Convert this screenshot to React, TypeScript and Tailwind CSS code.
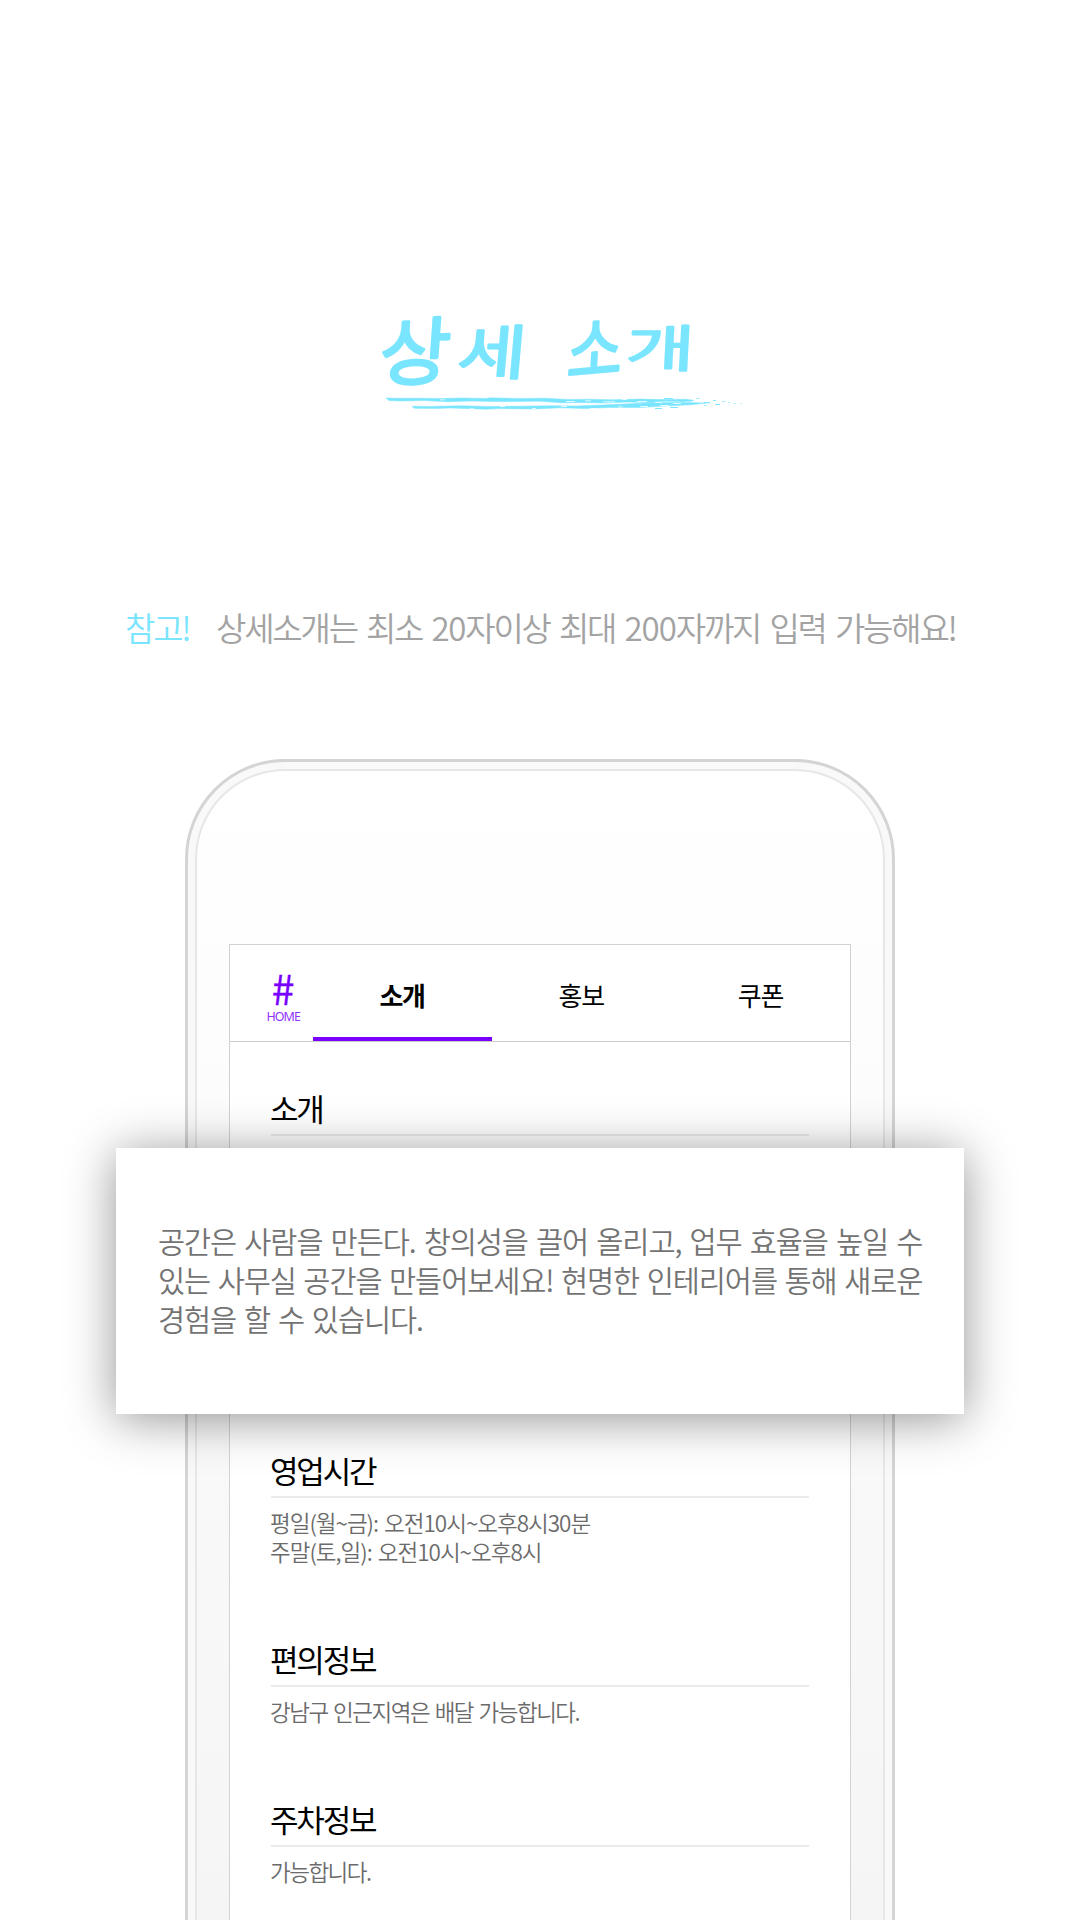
import type { ReactNode } from "react";

const glyphs = [
  { ch: "상", t: "translate(18 90) rotate(-2) skewX(-6) scale(1.1 1.05)" },
  { ch: "세", t: "translate(96 84) skewX(-5) scale(1.07 .84)" },
  { ch: "소", t: "translate(206 88) rotate(-5) skewX(-8) scale(.86 1)" },
  { ch: "개", t: "translate(265 77) skewX(-3) scale(1.07 .72)" },
];

const flecks = [
  [664, 398, 9, 1], [680, 400, 12, 1.4], [686, 403, 12, 1.2], [696, 398, 4, 0.8], [704, 402, 6, 1.2],
  [713, 400, 3, 1], [715, 404, 5, 1], [722, 401, 3, 0.8], [728, 402, 2, 0.8], [733, 403, 3, 0.6],
  [740, 403, 2, 0.6], [670, 407, 8, 1], [655, 408, 7, 1], [704, 405, 3, 0.8],
];

const gaps = [
  [566, 401, 9], [585, 400.5, 6], [603, 401.5, 12], [622, 399, 5], [637, 401, 10], [655, 402, 7],
  [561, 406, 6], [590, 408, 7], [618, 406.5, 5], [640, 406, 8], [470, 408.5, 4], [440, 399.5, 5],
  [500, 406, 5], [532, 408, 4], [660, 405, 9], [673, 403, 8],
];

function BrushTitle() {
  return (
    <h1 className="ml-[360px]">
      <svg className="block h-[140px] w-[400px]" viewBox="0 0 400 140" fill="#7ae5ff" stroke="#7ae5ff">
        <g
          className="font-['Noto_Sans_CJK_KR',sans-serif] text-[70px] font-[350]"
          strokeWidth="2.8"
          strokeLinejoin="round"
          strokeLinecap="round"
        >
          {glyphs.map((g) => (
            <text key={g.ch} transform={g.t}>{g.ch}</text>
          ))}
        </g>
        <g transform="translate(-360 -290)" stroke="none">
          <g stroke="#7ae5ff" strokeWidth=".5">
            <path d="M386 398L396 398.3L418 398.2L440 398.6L462 398L486 398.5L490 397.8L520 398.6L545 398.2L568 399.4L590 399.2L612 399.8L640 399L662 399.6L686 399.2L694 400.4L682 401.4L664 401.2L650 402.6L628 402L604 403L580 402.4L562 402.8L540 401.2L500 401.6L470 401L448 401.8L424 400.6L400 401L389 400.6Z" />
            <path d="M412 406.2L430 406.4L460 405.8L488 406.4L520 406.2L548 405.8L576 406L602 405L630 403.8L656 402.6L684 402.4L706 403L690 404.8L664 406L640 407.6L610 407.4L585 408.6L560 407.8L535 409L500 408.6L486 409.2L450 408L436 408.6L414 408.2Z" />
          </g>
          {flecks.map(([x, y, w, h], i) => (
            <rect key={i} x={x} y={y} width={w} height={h} rx=".5" />
          ))}
          {gaps.map(([x, y, w], i) => (
            <rect key={i} x={x} y={y} width={w} height=".7" rx=".3" fill="#fff" />
          ))}
        </g>
      </svg>
    </h1>
  );
}

function Section({ title, className, children }: { title: string; className: string; children?: ReactNode }) {
  return (
    <section className={className}>
      <h2 className="-ml-px h-[45px] text-[31px] leading-[38px] tracking-[-2.2px] text-black">{title}</h2>
      <div className="h-[2px] bg-[#ebebeb]" />
      <div className="-ml-px pt-[10px] text-[22.5px] font-[350] leading-[28.5px] tracking-[-1.5px] text-[#6b6b6b] [word-spacing:2px]">
        {children}
      </div>
    </section>
  );
}

export default function App() {
  return (
    <main className="relative h-[1920px] w-[1080px] overflow-hidden whitespace-nowrap bg-white pt-[290px] font-['Noto_Sans_CJK_KR',sans-serif]">
      <BrushTitle />
      <p className="mt-[172px] flex h-[50px] items-center pl-[125px] text-[33px] font-[350] leading-[50px] tracking-[-2.2px] text-[#a3a3a3] [word-spacing:4px]">
        <span className="w-[91px] text-[#7ae5ff]">참고!</span>
        <span>
          상세소개는 최소 <span className="tracking-[-1.2px]">20</span>자이상 최대{" "}
          <span className="tracking-[-1px]">200</span>자까지 입력 가능해요!
        </span>
      </p>

      <div className="mx-auto mt-[107px] h-[1300px] w-[710px] rounded-t-[100px] border-[3px] border-[#d4d4d4] bg-[#f9f9f9] p-[7px]">
        <div className="h-full rounded-t-[90px] border-2 border-[#e7e7e7] bg-gradient-to-b from-white to-[#f4f4f4] px-8 pt-[173px]">
          <div className="h-[1100px] border border-[#d2d2d2] bg-white">
            <nav className="flex h-[97px] border-b border-[#cbcbcb] text-[26px] tracking-[-1.3px] text-black">
              <div className="flex w-[82.5px] flex-col items-center pl-[24px] pt-[23px] text-[#7800ff]">
                <span className="h-[38px] text-[41px] leading-[38px] tracking-normal [-webkit-text-stroke:0.3px_#7800ff]">#</span>
                <span className="mt-[5px] font-['Noto_Sans',sans-serif] text-[12.5px] font-normal leading-[12px] tracking-[-0.9px] text-[#8f33ff]">HOME</span>
              </div>
              <div className="grid flex-1 grid-cols-3 text-center leading-[99px]">
                <span className="h-[96px] border-b-4 border-[#7800ff] font-bold">소개</span>
                <span>홍보</span>
                <span>쿠폰</span>
              </div>
            </nav>
            <div className="pl-[41px] pr-[41px] pt-[47px]">
              <Section title="소개" className="h-[362px]" />
              <Section title="영업시간" className="h-[189px]">
                <p className="tracking-[-1px]">평일(월~금): 오전10시~오후8시30분</p>
                <p className="tracking-[-1px]">주말(토,일): 오전10시~오후8시</p>
              </Section>
              <Section title="편의정보" className="h-[160px]">
                <p>강남구 인근지역은 배달 가능합니다.</p>
              </Section>
              <Section title="주차정보" className="h-[160px]">
                <p>가능합니다.</p>
              </Section>
            </div>
          </div>
        </div>
      </div>

      <article className="absolute left-[116px] top-[1148px] h-[266px] w-[848px] bg-white pl-[42px] pt-[73px] text-[29.5px] font-[350] leading-[39px] tracking-[-1.1px] text-[#737373] shadow-[0_5px_46px_rgba(0,0,0,0.42)]">
        <p className="[word-spacing:2.7px]">공간은 사람을 만든다. 창의성을 끌어 올리고, 업무 효율을 높일 수</p>
        <p className="[word-spacing:2.1px]">있는 사무실 공간을 만들어보세요! 현명한 인테리어를 통해 새로운</p>
        <p className="[word-spacing:2.4px]">경험을 할 수 있습니다.</p>
      </article>
    </main>
  );
}
